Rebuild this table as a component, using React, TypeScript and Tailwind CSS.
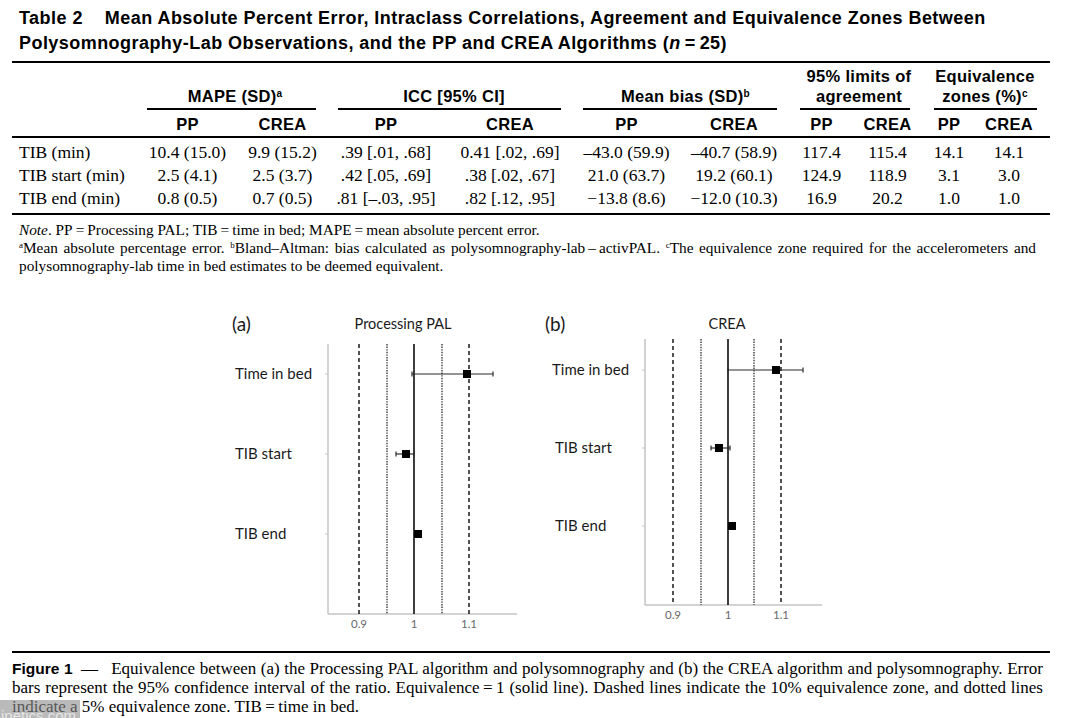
import React from "react";

const serif = "font-['Liberation_Serif','Times_New_Roman',serif]";
const sans = "font-['Liberation_Sans',Arial,sans-serif]";

const rows: string[][] = [
  ["TIB (min)", "10.4 (15.0)", "9.9 (15.2)", ".39 [.01, .68]", "0.41 [.02, .69]", "\u201343.0 (59.9)", "\u201340.7 (58.9)", "117.4", "115.4", "14.1", "14.1"],
  ["TIB start (min)", "2.5 (4.1)", "2.5 (3.7)", ".42 [.05, .69]", ".38 [.02, .67]", "21.0 (63.7)", "19.2 (60.1)", "124.9", "118.9", "3.1", "3.0"],
  ["TIB end (min)", "0.8 (0.5)", "0.7 (0.5)", ".81 [\u2013.03, .95]", ".82 [.12, .95]", "\u221213.8 (8.6)", "\u221212.0 (10.3)", "16.9", "20.2", "1.0", "1.0"],
];

const gridCols =
  "grid grid-cols-[128px_95px_95px_112px_136px_97px_118px_57px_75px_48px_72px]";

function GroupHead({
  children,
  ml,
  mr,
}: {
  children: React.ReactNode;
  ml: string;
  mr: string;
}) {
  return (
    <div className="col-span-2 flex flex-col justify-end">
      <div className="text-center leading-[20px]">{children}</div>
      <div className={`mt-[2px] h-[1.5px] bg-black ${ml} ${mr}`} />
    </div>
  );
}

type Pt = { label: string; lx: number; y: number; lo?: number; hi?: number; est: number };

function Forest({
  tag,
  title,
  titleX,
  tagX,
  tagY,
  titleY,
  axisX,
  axisTop,
  axisBottom,
  axisRight,
  lines,
  pts,
  w,
  h,
}: {
  tag: string;
  title: string;
  titleX: number;
  tagX: number;
  tagY: number;
  titleY: number;
  axisX: number;
  axisTop: number;
  axisBottom: number;
  axisRight: number;
  lines: number[];
  pts: Pt[];
  w: number;
  h: number;
}) {
  const [d1, p1, s, p2, d2] = lines;
  return (
    <svg width={w} height={h} className="font-['Lato','Open_Sans',sans-serif] shrink-0">
      <text x={tagX} y={tagY} fontSize={19} fill="#1a1a1a">
        {tag}
      </text>
      <text x={titleX} y={titleY} fontSize={14.5} fill="#1a1a1a" textAnchor="middle">
        {title}
      </text>
      {/* axes */}
      <line x1={axisX} y1={axisTop} x2={axisX} y2={axisBottom} stroke="#c4c4c4" strokeWidth={1.5} />
      <line x1={axisX} y1={axisBottom} x2={axisRight} y2={axisBottom} stroke="#c4c4c4" strokeWidth={1.5} />
      {pts.map((p) => (
        <line key={p.label + "t"} x1={axisX - 3} y1={p.y} x2={axisX} y2={p.y} stroke="#c4c4c4" strokeWidth={1} />
      ))}
      {/* reference lines */}
      {[d1, d2].map((x) => (
        <line key={"d" + x} x1={x} y1={axisTop} x2={x} y2={axisBottom} stroke="#1a1a1a" strokeWidth={1.5} strokeDasharray="4 3" />
      ))}
      {[p1, p2].map((x) => (
        <line key={"p" + x} x1={x} y1={axisTop} x2={x} y2={axisBottom} stroke="#2a2a2a" strokeWidth={1.3} strokeDasharray="1.4 1.2" />
      ))}
      <line x1={s} y1={axisTop} x2={s} y2={axisBottom} stroke="#1a1a1a" strokeWidth={1.7} />
      {/* tick labels */}
      {[
        [d1, "0.9"],
        [s, "1"],
        [d2, "1.1"],
      ].map(([x, t]) => (
        <text key={t as string} x={x as number} y={axisBottom + 14} fontSize={11.5} fill="#6a6a6a" textAnchor="middle">
          {t}
        </text>
      ))}
      {/* points */}
      {pts.map((p) => (
        <g key={p.label}>
          <text x={p.lx} y={p.y + 5} fontSize={15} fill="#1a1a1a">
            {p.label}
          </text>
          {p.lo !== undefined && p.hi !== undefined && (
            <>
              <line x1={p.lo} y1={p.y} x2={p.hi} y2={p.y} stroke="#2a2a2a" strokeWidth={1.2} />
              <line x1={p.lo} y1={p.y - 2.5} x2={p.lo} y2={p.y + 2.5} stroke="#2a2a2a" strokeWidth={1.2} />
              <line x1={p.hi} y1={p.y - 2.5} x2={p.hi} y2={p.y + 2.5} stroke="#2a2a2a" strokeWidth={1.2} />
            </>
          )}
          <rect x={p.est - 4} y={p.y - 4} width={8} height={8} fill="#000" />
        </g>
      ))}
    </svg>
  );
}

export default function App() {
  return (
    <div className="relative h-[718px] w-[1065px] overflow-hidden bg-white text-black">
      {/* Title */}
      <div className={`${sans} pl-[19px] pt-[6px] text-[18px] font-bold leading-[25px] tracking-[0.45px]`}>
        <div className="whitespace-nowrap">
          <span className="mr-[22px]">Table 2</span>
          Mean Absolute Percent Error, Intraclass Correlations, Agreement and Equivalence Zones Between
        </div>
        <div className="whitespace-nowrap">
          Polysomnography-Lab Observations, and the PP and CREA Algorithms (<i>n</i>
          {"\u2009=\u200925)"}
        </div>
      </div>

      <div className="mx-[12px] mt-[5px] w-[1038px]">
        <div className="h-[2px] bg-black" />

        {/* table header */}
        <div className={`${gridCols} ${sans} text-[16.5px] font-bold tracking-[0.3px]`}>
          <div />
          <GroupHead ml="ml-[7px]" mr="mr-[14px]">
            MAPE (SD)<sup className="text-[10px]">a</sup>
          </GroupHead>
          <GroupHead ml="ml-[8px]" mr="mr-[17px]">
            ICC [95% CI]
          </GroupHead>
          <GroupHead ml="ml-[5px]" mr="mr-[16px]">
            Mean bias (SD)<sup className="text-[10px]">b</sup>
          </GroupHead>
          <GroupHead ml="ml-[7px]" mr="mr-[15px]">
            <div className="pt-[3px] whitespace-nowrap">95% limits of</div>
            <div>agreement</div>
          </GroupHead>
          <GroupHead ml="ml-[9px]" mr="mr-[8px]">
            <div className="pt-[3px]">Equivalence</div>
            <div className="whitespace-nowrap">
              zones (%)<sup className="text-[10px]">c</sup>
            </div>
          </GroupHead>
          {["", "PP", "CREA", "PP", "CREA", "PP", "CREA", "PP", "CREA", "PP", "CREA"].map((t, i) => (
            <div key={i} className="pb-[2px] pt-[4px] text-center leading-[20px]">
              {t}
            </div>
          ))}
        </div>
        <div className="h-[2px] bg-black" />

        {/* body */}
        <div className={`${gridCols} ${serif} py-[3px] text-[17.5px] leading-[23px]`}>
          {rows.map((r) =>
            r.map((c, i) => (
              <div key={r[0] + i} className={i === 0 ? "pl-[7px] whitespace-nowrap" : "text-center whitespace-nowrap"}>
                {c}
              </div>
            ))
          )}
        </div>
        <div className="h-[2px] bg-black" />
      </div>

      {/* notes */}
      <div className={`${serif} mt-[6px] w-[1036px] pl-[19px] text-[15.3px] leading-[18px]`}>
        <div>
          <i>Note</i>. PP{"\u2009=\u2009"}Processing PAL; TIB{"\u2009=\u2009"}time in bed; MAPE{"\u2009=\u2009"}mean absolute percent error.
        </div>
        <p className="text-justify [text-align-last:left]">
          <sup className="text-[9px] leading-none">a</sup>Mean absolute percentage error. <sup className="text-[9px] leading-none">b</sup>Bland–Altman: bias calculated as polysomnography-lab{"\u2009\u2013\u2009"}activPAL. <sup className="text-[9px] leading-none">c</sup>The equivalence zone required for the accelerometers and polysomnography-lab time in bed estimates to be deemed equivalent.
        </p>
      </div>

      {/* figures */}
      <div className="mt-[27px] flex h-[335px] items-start">
        <div className="ml-[225px] mt-[5px]">
          <Forest
            tag="(a)"
            title="Processing PAL"
            titleX={178}
            tagX={7}
            tagY={24}
            titleY={22}
            axisX={103}
            axisTop={37}
            axisBottom={307}
            axisRight={292}
            lines={[134, 162, 189, 217, 244]}
            w={300}
            h={330}
            pts={[
              { label: "Time in bed", lx: 10, y: 67, lo: 187, hi: 268, est: 242 },
              { label: "TIB start", lx: 10, y: 147, lo: 171, hi: 189, est: 181 },
              { label: "TIB end", lx: 10, y: 227, est: 193 },
            ]}
          />
        </div>
        <div className="ml-[15px]">
          <Forest
            tag="(b)"
            title="CREA"
            titleX={187}
            tagX={5}
            tagY={29}
            titleY={27}
            axisX={105}
            axisTop={37}
            axisBottom={303}
            axisRight={282}
            lines={[133, 161, 188, 214, 241]}
            w={300}
            h={330}
            pts={[
              { label: "Time in bed", lx: 12, y: 68, lo: 188, hi: 263, est: 236 },
              { label: "TIB start", lx: 15, y: 146, lo: 171, hi: 190, est: 179 },
              { label: "TIB end", lx: 15, y: 224, est: 192 },
            ]}
          />
        </div>
      </div>

      {/* caption */}
      <div className="mx-[12px] mt-[14px] h-[2px] w-[1038px] bg-black" />
      <p className={`${serif} mt-[6px] w-[1043px] pl-[12px] text-justify text-[17px] leading-[19px] [text-align-last:left]`}>
        <span className={`${sans} text-[15.5px] font-bold`}>Figure 1</span>
        {"\u2002\u2014\u2002 "}Equivalence between (a) the Processing PAL algorithm and polysomnography and (b) the CREA algorithm and polysomnography. Error bars represent the 95% confidence interval of the ratio. Equivalence{"\u2009=\u2009"}1 (solid line). Dashed lines indicate the 10% equivalence zone, and dotted lines indicate a 5% equivalence zone. TIB{"\u2009=\u2009"}time in bed.
      </p>

      {/* watermark */}
      <div className="absolute bottom-0 left-0 h-[18px] w-[80px] overflow-hidden bg-[#8c8c8c]/60">
        <div className={`${sans} mt-[8px] pl-[1px] text-[15px] leading-[15px] text-[#e6e6e6]`}>inetics.com</div>
      </div>
    </div>
  );
}
